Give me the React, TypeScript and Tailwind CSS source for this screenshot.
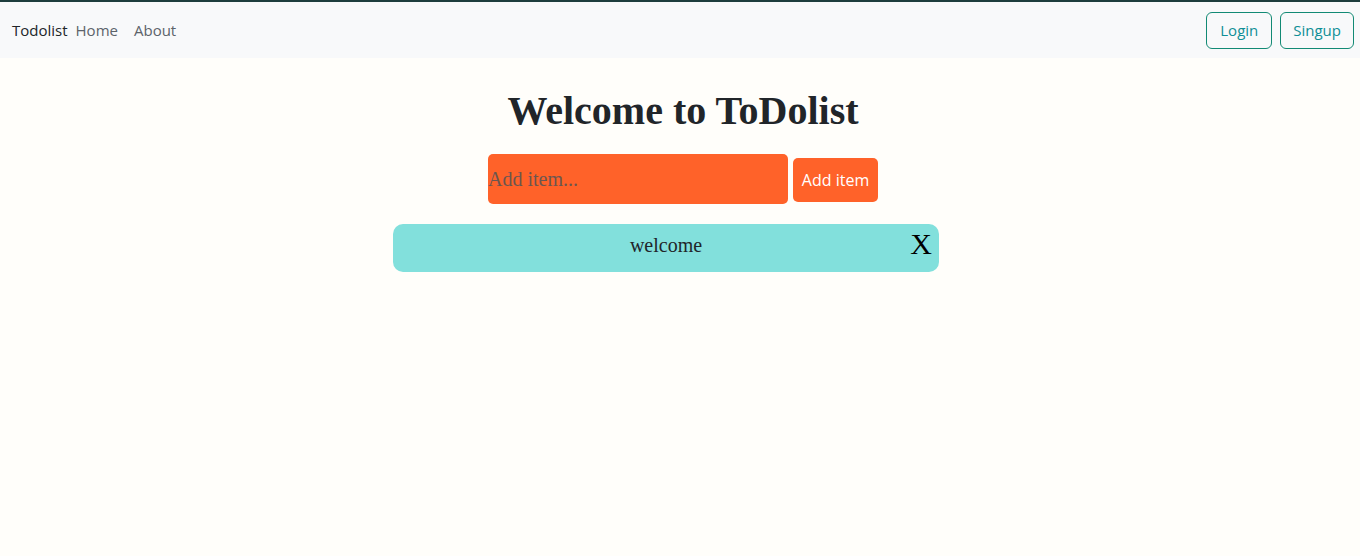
import React from "react";

const App = () => {
  return (
    <div className="min-h-[556px] bg-[#fffefa]">
      <nav className="flex h-[58px] items-center justify-between border-t-2 border-[#1d3d3d] bg-[#f8f9fa] pl-3 pr-[6px] font-['Open_Sans','Noto_Sans',sans-serif]">
        <div className="flex items-center text-[15px]">
          <span className="mr-2 text-[#212529]">Todolist</span>
          <span className="text-[#5c636a]">Home</span>
          <span className="ml-4 text-[#5c636a]">About</span>
        </div>
        <div className="flex items-center gap-2">
          <button className="h-[37px] rounded-md border border-[#128a74] px-[13px] text-[15px] text-[#0f8f96]">
            Login
          </button>
          <button className="h-[37px] rounded-md border border-[#128a74] px-[12px] text-[15px] text-[#0f8f96]">
            Singup
          </button>
        </div>
      </nav>
      <main className="flex flex-col items-center">
        <h1 className="ml-[6px] mt-[29px] font-['Liberation_Serif',serif] text-[40px] font-bold leading-[48px] text-[#212529]">
          Welcome to ToDolist
        </h1>
        <div className="ml-[6px] mt-[19px] flex items-center gap-[5px]">
          <input
            placeholder="Add item..."
            className="h-[50px] w-[300px] rounded-[5px] bg-[#ff6229] font-['Liberation_Serif',serif] text-[20px] text-[#212529] outline-none placeholder:text-[#6b5650]"
          />
          <button className="mt-[2px] h-[44px] w-[85px] rounded-[5px] bg-[#ff6229] font-['Open_Sans','Noto_Sans',sans-serif] text-[16px] text-white">
            Add item
          </button>
        </div>
        <div className="relative mr-[28px] mt-[20px] flex h-[48px] w-[546px] items-center justify-center rounded-[10px] bg-[#82e0dc] pb-[6px]">
          <span className="font-['Liberation_Serif',serif] text-[20px] text-[#212529]">welcome</span>
          <span className="absolute right-[7px] top-0 font-['Liberation_Serif',serif] text-[30px] leading-[40px] text-black">
            X
          </span>
        </div>
      </main>
    </div>
  );
};

export default App;
